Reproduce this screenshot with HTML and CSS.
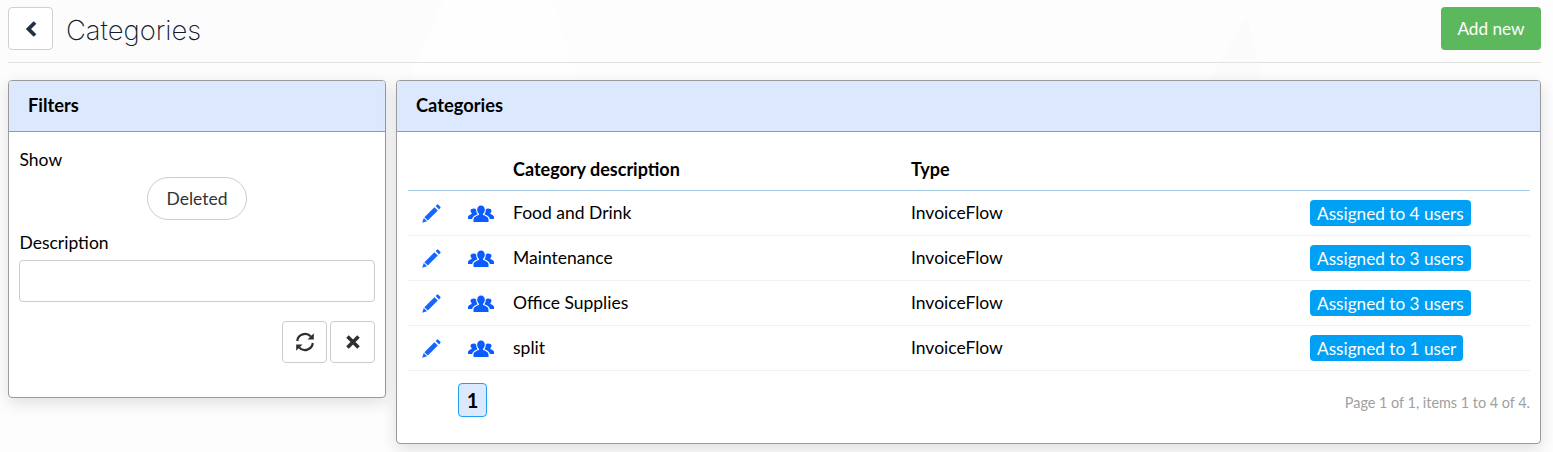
FILE: index.html
```html
<!DOCTYPE html>
<html lang="en">
<head>
<meta charset="utf-8">
<title>Categories</title>
<link rel="stylesheet" href="styles.css">
</head>
<body>
<svg class="backdrop" width="1553" height="100" viewBox="0 0 1553 100" aria-hidden="true">
  <polygon points="443,0 552,0 585,100 400,100" fill="#fefefe"/>
  <polygon points="552,0 1553,0 1553,100 585,100" fill="#fdfdfd"/>
  <polygon points="1247,17 1210,80 1262,80" fill="#fbfbfb"/>
</svg>
<header class="topbar">
  <button class="back-btn" type="button" aria-label="Back">
    <svg width="12" height="16" viewBox="0 0 12 16"><path d="M10 1.500 3.500 8 10 14.500" fill="none" stroke="#1f3044" stroke-width="3.800"/></svg>
  </button>
  <h1 class="page-title">Categories</h1>
  <button class="add-btn" type="button">Add new</button>
</header>
<main class="content">
  <section class="panel panel-filters">
    <h2 class="panel-head">Filters</h2>
    <div class="filters-body">
      <div class="field-label">Show</div>
      <div class="pill-row"><button class="pill" type="button">Deleted</button></div>
      <label class="field-label field-label-desc" for="desc">Description</label>
      <input class="text-input" id="desc" type="text">
      <div class="filter-actions">
        <button class="icon-btn" type="button" aria-label="Refresh">
          <svg width="20" height="20" viewBox="0 0 20 20"><path d="M2.200 9A7.900 7.900 0 0 1 15.800 4.500M17.800 11A7.900 7.900 0 0 1 4.200 15.500" fill="none" stroke="#2f2f2f" stroke-width="2.200"/><path d="M12.500 7.500h6.300V1.200zM7.500 12.500H1.200v6.300z" fill="#2f2f2f"/></svg>
        </button>
        <button class="icon-btn" type="button" aria-label="Clear">
          <svg width="16" height="16" viewBox="0 0 16 16"><path d="M2.500 2.500 13.500 13.500M13.500 2.500 2.500 13.500" fill="none" stroke="#2f2f2f" stroke-width="3.600"/></svg>
        </button>
      </div>
    </div>
  </section>
  <section class="panel panel-list">
    <h2 class="panel-head">Categories</h2>
    <div class="list-body">
      <table class="grid">
        <thead>
          <tr><th class="col-edit"></th><th class="col-users"></th><th class="col-desc">Category description</th><th class="col-type">Type</th><th class="col-badge"></th></tr>
        </thead>
        <tbody>
          <tr>
            <td class="cell-icon"><svg class="ico" width="20" height="20" viewBox="0 0 20 20"><use href="#pencil"/></svg></td>
            <td class="cell-icon"><svg class="ico" width="28" height="20" viewBox="0 0 28 20"><use href="#group"/></svg></td>
            <td>Food and Drink</td><td>InvoiceFlow</td><td><span class="badge">Assigned to 4 users</span></td>
          </tr>
          <tr>
            <td class="cell-icon"><svg class="ico" width="20" height="20" viewBox="0 0 20 20"><use href="#pencil"/></svg></td>
            <td class="cell-icon"><svg class="ico" width="28" height="20" viewBox="0 0 28 20"><use href="#group"/></svg></td>
            <td>Maintenance</td><td>InvoiceFlow</td><td><span class="badge">Assigned to 3 users</span></td>
          </tr>
          <tr>
            <td class="cell-icon"><svg class="ico" width="20" height="20" viewBox="0 0 20 20"><use href="#pencil"/></svg></td>
            <td class="cell-icon"><svg class="ico" width="28" height="20" viewBox="0 0 28 20"><use href="#group"/></svg></td>
            <td>Office Supplies</td><td>InvoiceFlow</td><td><span class="badge">Assigned to 3 users</span></td>
          </tr>
          <tr>
            <td class="cell-icon"><svg class="ico" width="20" height="20" viewBox="0 0 20 20"><use href="#pencil"/></svg></td>
            <td class="cell-icon"><svg class="ico" width="28" height="20" viewBox="0 0 28 20"><use href="#group"/></svg></td>
            <td>split</td><td>InvoiceFlow</td><td><span class="badge">Assigned to 1 user</span></td>
          </tr>
        </tbody>
      </table>
      <div class="pager-row">
        <span class="page-current">1</span>
        <span class="page-info">Page 1 of 1, items 1 to 4 of 4.</span>
      </div>
    </div>
  </section>
</main>
<svg width="0" height="0" class="defs" aria-hidden="true">
  <defs>
    <g id="pencil" fill="#1565ff"><path d="M13.400 3.200 16.800 6.600 6.800 16.600 3.400 13.200z"/><path d="M2.800 14 6 17.200 1.200 18.800z"/><path d="M14.600 2 15.900.7a1 1 0 0 1 1.400 0l2 2a1 1 0 0 1 0 1.400L18 5.400z"/></g>
    <g id="group" fill="#0b5cff"><path d="M14 1.500c2.400 0 3.800 1.800 3.800 4.200 0 1.700-.7 3.200-1.800 4v1.200c2.800.8 5.500 2.100 5.500 4.500V18H6.500v-2.600c0-2.400 2.700-3.700 5.500-4.500V9.700c-1.100-.8-1.800-2.300-1.800-4C10.200 3.300 11.600 1.500 14 1.500z"/><path d="M7 4.500c1 0 1.800.4 2.300 1.200-.2 1.600.3 3.200 1.400 4.500-2.600.9-5 2.300-5.600 4.800H1v-2c0-1.500 2-2.500 3.700-3V9.200c-.8-.7-1.200-1.600-1.200-2.500C3.500 5.400 5 4.500 7 4.500z"/><path d="M21 4.500c-1 0-1.800.4-2.300 1.200.2 1.600-.3 3.200-1.400 4.500 2.600.9 5 2.300 5.600 4.800H27v-2c0-1.500-2-2.500-3.700-3V9.200c.8-.7 1.200-1.600 1.200-2.500C24.500 5.400 23 4.500 21 4.500z"/></g>
  </defs>
</svg>
</body>
</html>
```
FILE: styles.css
```css
* { box-sizing: border-box; }
html, body { margin: 0; height: 452px; overflow: hidden; }
body {
  background: #fdfdfd;
  font-family: "Lato", "Liberation Sans", sans-serif;
  font-size: 17.500px;
  color: #000;
  padding: 7px 12px 0 8px;
  position: relative;
}
.backdrop { position: absolute; top: 0; left: 0; background: #fcfcfc; }
.defs { position: absolute; }
.topbar {
  position: relative;
  display: flex;
  align-items: flex-start;
  height: 56px;
  border-bottom: 1px solid #e2e2e2;
}
.back-btn {
  width: 45px;
  height: 43px;
  background: #fff;
  border: 1px solid #d0d0d0;
  border-radius: 4px;
  display: flex;
  align-items: center;
  justify-content: center;
  padding: 0;
}
.page-title {
  margin: 0 0 0 13px;
  font-family: "Inter", "Lato", sans-serif;
  font-weight: 200;
  font-size: 27.400px;
  line-height: 47px;
  color: #101c2c;
}
.add-btn {
  margin-left: auto;
  width: 100px;
  height: 43px;
  background: #5cb85c;
  border: 0;
  border-radius: 4px;
  color: #fff;
  font: 17.200px "Lato", sans-serif;
  padding: 0;
}
.content {
  position: relative;
  display: flex;
  align-items: flex-start;
  gap: 10px;
  margin-top: 17px;
}
.panel {
  background: #fff;
  border: 1px solid #9a9a9a;
  border-radius: 4px;
  box-shadow: 0 5px 16px rgba(0, 0, 0, .12);
}
.panel-filters { width: 378px; height: 318px; }
.panel-list { flex: 1; height: 364px; }
.panel-head {
  margin: 0;
  height: 51px;
  padding: 0 19px;
  background: #dce8fd;
  border-bottom: 1px solid #9a9a9a;
  border-radius: 3px 3px 0 0;
  font-size: 18.300px;
  font-weight: 700;
  line-height: 48px;
}
.filters-body { padding: 17px 10px 0; }
.field-label { display: block; line-height: 22px; padding-left: .5px; }
.pill-row { display: flex; justify-content: center; margin-top: 6px; }
.pill {
  width: 100px;
  height: 43px;
  background: #fff;
  border: 1px solid #ccc;
  border-radius: 22px;
  color: #333;
  font: 17.500px "Lato", sans-serif;
  padding: 0;
}
.field-label-desc { margin-top: 12px; }
.text-input {
  display: block;
  width: 100%;
  height: 42px;
  margin-top: 6px;
  border: 1px solid #ccc;
  border-radius: 4px;
  background: #fff;
}
.filter-actions { display: flex; justify-content: flex-end; gap: 3px; margin-top: 19px; }
.icon-btn {
  width: 45px;
  height: 42px;
  background: #fff;
  border: 1px solid #ccc;
  border-radius: 4px;
  display: flex;
  align-items: center;
  justify-content: center;
  padding: 0;
}
.list-body { padding: 15px 10px 0 11px; }
.grid { width: 100%; border-collapse: collapse; table-layout: fixed; }
.grid th { text-align: left; font-weight: 700; font-size: 18px; height: 43px; padding: 2px 0 0; border-bottom: 1px solid #a3d0e6; }
.grid td { height: 45px; padding: 0; border-bottom: 1px solid #f1f1f1; }
.col-edit { width: 48px; }
.col-users { width: 57px; }
.col-desc { width: 398px; }
.col-type { width: 399px; }
.cell-icon { line-height: 0; }
.ico { display: inline-block; margin: 3px 0 0 13px; }
.cell-icon + .cell-icon .ico { margin-left: 11px; }
.badge {
  display: inline-block;
  padding: 0 7px;
  height: 26px;
  line-height: 27px;
  font-size: 17.200px;
  background: #00a0f5;
  color: #fff;
  border-radius: 4px;
}
.pager-row {
  display: flex;
  justify-content: space-between;
  align-items: center;
  margin-top: 12px;
  height: 34px;
  padding-left: 50px;
}
.page-current {
  width: 29px;
  height: 34px;
  line-height: 32px;
  text-align: center;
  background: #dce8fd;
  border: 1px solid #1ba1f0;
  border-radius: 4px;
  font-weight: 700;
  font-size: 20px;
}
.page-info { color: #a0a0a0; font-size: 14.400px; margin-top: 6px; }
```
